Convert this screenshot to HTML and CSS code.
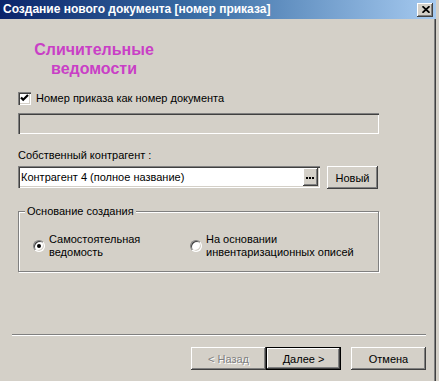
FILE: index.html
```html
<!DOCTYPE html>
<html lang="ru">
<head>
<meta charset="utf-8">
<title>Создание нового документа</title>
<link rel="stylesheet" href="styles.css">
</head>
<body>
<div class="window">
  <div class="titlebar">
    <span class="title">Создание нового документа [номер приказа]</span>
    <span class="close">
      <svg width="8" height="7" viewBox="0 0 8 7"><path d="M0.5 0.2 L7.5 6.8 M7.5 0.2 L0.5 6.8" stroke="#000" stroke-width="1.7" fill="none"/></svg>
    </span>
  </div>
  <div class="client">
    <div class="heading">Сличительные<br>ведомости</div>

    <div class="check-row">
      <span class="checkbox">
        <svg width="9" height="9" viewBox="0 0 9 9"><path d="M1 3.5 L3.2 5.8 L8 1" stroke="#000" stroke-width="2.2" fill="none"/></svg>
      </span>
      <span class="check-label">Номер приказа как номер документа</span>
    </div>

    <div class="field disabled"></div>

    <div class="label">Собственный контрагент :</div>

    <div class="combo-row">
      <div class="combo">
        <span class="combo-text">Контрагент 4 (полное название)</span>
        <span class="ellipsis-btn">
          <svg width="9" height="2" viewBox="0 0 9 2"><rect x="0" y="0" width="2" height="2"/><rect x="3" y="0" width="2" height="2"/><rect x="6" y="0" width="2" height="2"/></svg>
        </span>
      </div>
      <div class="btn new-btn">Новый</div>
    </div>

    <fieldset class="group">
      <legend>Основание создания</legend>
      <div class="radios">
        <div class="radio-item first">
          <span class="radio checked"></span>
          <span class="radio-label">Самостоятельная<br>ведомость</span>
        </div>
        <div class="radio-item">
          <span class="radio"></span>
          <span class="radio-label">На основании<br>инвентаризационных описей</span>
        </div>
      </div>
    </fieldset>

    <div class="separator"></div>

    <div class="buttons">
      <div class="btn wizard disabled-btn">&lt; Назад</div>
      <div class="btn wizard default-btn">Далее &gt;</div>
      <div class="btn wizard cancel">Отмена</div>
    </div>
  </div>
</div>
</body>
</html>
```
FILE: styles.css
```css
* { box-sizing: border-box; }

html, body {
  margin: 0;
  padding: 0;
  background: #d4d0c8;
}

body {
  font-family: "Liberation Sans", Arial, sans-serif;
  font-size: 11px;
  color: #000;
  width: 439px;
  height: 381px;
  overflow: hidden;
}

.window {
  width: 436px;
  height: 381px;
  display: flex;
  flex-direction: column;
}

.titlebar {
  height: 19px;
  flex: none;
  display: flex;
  align-items: center;
  justify-content: space-between;
  padding: 0 3px 0 3px;
  background: linear-gradient(to right, #0a246a 0%, #3a6ea5 45%, #a6caf0 100%);
}

.title {
  color: #fff;
  font-weight: bold;
  font-size: 12px;
  line-height: 19px;
  white-space: nowrap;
}

.close {
  width: 16px;
  height: 14px;
  background: #d4d0c8;
  display: flex;
  align-items: center;
  justify-content: center;
  box-shadow: inset -1px -1px #404040, inset 1px 1px #fff, inset -2px -2px #808080;
  padding-left: 1px;
}

.client {
  flex: 1;
  padding-left: 18px;
  border-right: 1px solid #404040;
  box-shadow: inset -1px 0 #808080;
}

.heading {
  margin-top: 21px;
  width: 152px;
  text-align: center;
  font-weight: bold;
  font-size: 16px;
  line-height: 19px;
  color: #c93fc6;
}

.check-row {
  margin-top: 14px;
  height: 13px;
  display: flex;
  align-items: center;
  gap: 5px;
}

.checkbox {
  width: 13px;
  height: 13px;
  background: #fff;
  display: flex;
  align-items: center;
  justify-content: center;
  box-shadow: inset 1px 1px #808080, inset 2px 2px #404040, inset -1px -1px #fff, inset -2px -2px #d4d0c8;
}

.check-label { line-height: 13px; }

.field, .combo {
  box-shadow: inset 1px 1px #808080, inset 2px 2px #404040, inset -1px -1px #fff, inset -2px -2px #d4d0c8;
}

.field {
  margin-top: 8px;
  width: 361px;
  height: 21px;
  background: #d4d0c8;
}

.label {
  margin-top: 14px;
  line-height: 14px;
}

.combo-row {
  margin-top: 4px;
  display: flex;
  align-items: flex-start;
  gap: 7px;
}

.combo {
  width: 302px;
  height: 22px;
  background: #fff;
  padding: 2px;
  display: flex;
  align-items: center;
}

.combo-text {
  flex: 1;
  padding-left: 1px;
  line-height: 16px;
  white-space: nowrap;
}

.ellipsis-btn {
  width: 15px;
  height: 18px;
  background: #d4d0c8;
  display: flex;
  align-items: center;
  justify-content: center;
  padding-top: 1px;
  box-shadow: inset -1px -1px #404040, inset 1px 1px #fff, inset -2px -2px #808080;
}

.btn {
  background: #d4d0c8;
  display: flex;
  align-items: center;
  justify-content: center;
  box-shadow: inset -1px -1px #404040, inset 1px 1px #fff, inset -2px -2px #808080;
  white-space: nowrap;
}

.new-btn {
  width: 51px;
  height: 23px;
}

.group {
  margin: 16px 0 0 0;
  padding: 0;
  width: 361px;
  height: 67px;
  min-width: 0;
  border: 1px solid #808080;
  box-shadow: inset 1px 1px #fff, 1px 1px #fff;
}

.group legend {
  margin-left: 6px;
  padding: 0 2px;
  line-height: 13px;
  background: #d4d0c8;
}

.radios {
  margin-top: 15px;
  padding-left: 14px;
  display: flex;
}

.radio-item {
  display: flex;
  align-items: center;
  gap: 4px;
}

.radio-item.first { width: 157px; }

.radio-label { line-height: 13px; }

.radio {
  width: 12px;
  height: 12px;
  flex: none;
  border-radius: 50%;
  background: #fff;
  border: 1px solid;
  border-color: #808080 #fff #fff #808080;
  box-shadow: inset 1px 1px #404040, inset -1px -1px #d4d0c8;
  display: flex;
  align-items: center;
  justify-content: center;
}

.radio.checked::after {
  content: "";
  width: 4px;
  height: 4px;
  border-radius: 50%;
  background: #000;
}

.separator {
  margin-top: 62px;
  margin-left: -6px;
  width: 414px;
  height: 2px;
  border-top: 1px solid #808080;
  border-bottom: 1px solid #fff;
}

.buttons {
  margin-top: 11px;
  margin-left: -6px;
  width: 414px;
  display: flex;
  justify-content: flex-end;
}

.wizard {
  width: 75px;
  height: 23px;
}

.disabled-btn {
  color: #808080;
  text-shadow: 1px 1px #fff;
}

.default-btn {
  border: 1px solid #000;
  box-shadow: inset -1px -1px #404040, inset 1px 1px #fff, inset -2px -2px #808080;
}

.cancel { margin-left: 10px; }
```
